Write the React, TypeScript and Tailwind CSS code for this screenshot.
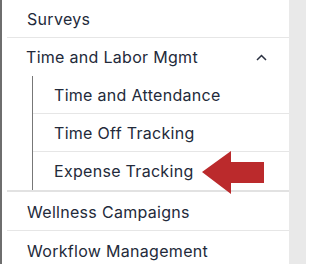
import React from 'react';

const subItems = ['Time and Attendance', 'Time Off Tracking', 'Expense Tracking'];

const Arrow: React.FC = () => (
    <svg className="absolute left-[202px] top-[151px]" width="63" height="44" viewBox="0 0 63 44">
        <polygon points="0,21 29,0 29,11 62,11 62,32 29,32 29,43" fill="#bb2a2c" />
    </svg>
);

export default function App() {
    return (
        <div
            className="relative w-[306px] h-[264px] overflow-hidden flex bg-[#e9e9e9]"
            style={{ fontFamily: 'Inter, "Open Sans", sans-serif' }}
        >
            {/* Panel */}
            <div className="w-[289px] h-full bg-white border-l-2 border-[#6e6e6e] pl-[5px] text-[16px] tracking-[0.3px] text-[#232a3a]">
                <div className="h-[38px] border-b border-[#e6e6e6] flex items-center pl-[20px]">Surveys</div>

                <div className="h-[38px] flex items-center justify-between pl-[19px] pr-[22px]">
                    <span>Time and Labor Mgmt</span>
                    <svg width="11" height="7" viewBox="0 0 11 7" fill="none" stroke="#2a3040" strokeWidth="1.5">
                        <path d="M1 6 L5.5 1.5 L10 6" />
                    </svg>
                </div>

                {/* Sub menu */}
                <div className="pl-[25px] border-b-2 border-[#e2e2e2]">
                    <div className="border-l border-[#777]">
                        {subItems.map((item, i) => (
                            <div
                                key={item}
                                className={`h-[38px] flex items-center pl-[21px] ${i < subItems.length - 1 ? 'border-b border-[#e6e6e6]' : ''}`}
                            >
                                {item}
                            </div>
                        ))}
                    </div>
                </div>

                <div className="h-[39px] border-b border-[#e6e6e6] flex items-center pl-[20px] pt-[1px]">Wellness Campaigns</div>
                <div className="h-[39px] flex items-center pl-[20px]">Workflow Management</div>
            </div>

            <Arrow />
        </div>
    );
}
